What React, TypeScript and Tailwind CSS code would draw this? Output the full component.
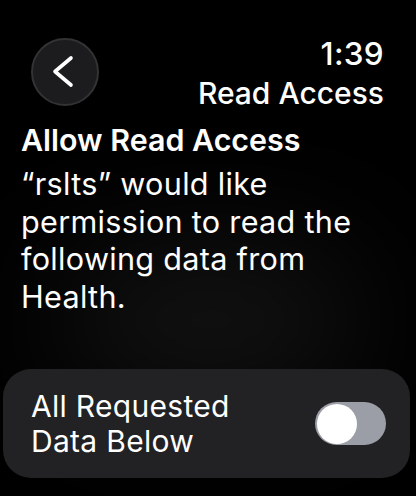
export default function App() {
  return (
    <div className="relative w-[416px] h-[496px] overflow-hidden bg-black text-white font-['Inter',sans-serif]">
      <div className="pointer-events-none absolute left-[60px] top-[250px] w-[300px] h-[140px] rounded-full bg-[#141414] blur-3xl" />
      <div className="relative flex flex-col">
        <div className="flex justify-between items-start pl-[31px] pr-[32px] pt-[38px]">
          <button className="w-[68px] h-[68px] rounded-full bg-[#1c1c1e] border-2 border-[#333335] flex items-center justify-center">
            <svg width="68" height="68" viewBox="0 0 68 68" fill="none" className="shrink-0">
              <polyline
                points="40,20 24,33.5 40,47"
                stroke="white"
                strokeWidth="3.6"
                strokeLinecap="round"
                strokeLinejoin="round"
              />
            </svg>
          </button>
          <div className="flex flex-col items-end -mt-[2px]">
            <span className="text-[31.5px] leading-[36px] font-medium tracking-[0.3px]">1:39</span>
            <span className="text-[30px] leading-[36px] mt-[3px] font-medium">Read Access</span>
          </div>
        </div>
        <div className="px-[21px] mt-[10px]">
          <h1 className="text-[30.4px] leading-[38px] font-semibold">Allow Read Access</h1>
          <p className="mt-[6px] text-[30.6px] leading-[37.5px] tracking-[0.3px] w-[385px]">
            “rslts” would like permission to read the following data from Health.
          </p>
        </div>
        <div className="ml-[3px] mt-[54px] w-[407px] h-[109px] rounded-[28px] bg-[#222224] flex items-center justify-between pl-[28px] pr-[24px]">
          <span className="text-[30px] leading-[35px] tracking-[0.3px]">
            All Requested
            <br />
            Data Below
          </span>
          <div className="w-[71px] h-[43px] rounded-full bg-[#9b9ea6] p-[2px] flex items-center">
            <div className="w-[40px] h-[40px] rounded-full bg-white" />
          </div>
        </div>
      </div>
    </div>
  )
}
